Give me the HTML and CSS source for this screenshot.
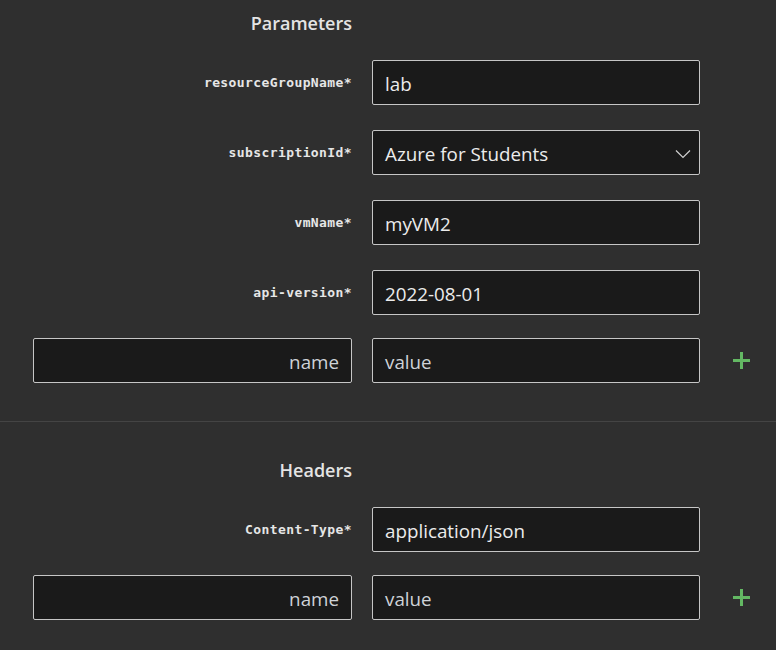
FILE: index.html
```html
<!DOCTYPE html>
<html>
<head>
<meta charset="utf-8">
<link rel="stylesheet" href="styles.css">
</head>
<body>
<section class="section section-params">
  <h2 class="heading">Parameters</h2>
  <div class="rows">
    <div class="row">
      <label class="label">resourceGroupName*</label>
      <div class="field"><span class="value">lab</span></div>
    </div>
    <div class="row">
      <label class="label">subscriptionId*</label>
      <div class="field select"><span class="value">Azure for Students</span>
        <svg class="chevron" width="16" height="10" viewBox="0 0 16 10"><path d="M1 1.5 L8 8.5 L15 1.5" fill="none" stroke="#d0d0d0" stroke-width="1.2"/></svg>
      </div>
    </div>
    <div class="row">
      <label class="label">vmName*</label>
      <div class="field"><span class="value">myVM2</span></div>
    </div>
    <div class="row">
      <label class="label">api-version*</label>
      <div class="field"><span class="value">2022-08-01</span></div>
    </div>
  </div>
  <div class="row add-row">
    <div class="field name-field"><span class="placeholder">name</span></div>
    <div class="field"><span class="placeholder">value</span></div>
    <span class="plus" aria-label="add"></span>
  </div>
</section>
<section class="section section-headers">
  <h2 class="heading">Headers</h2>
  <div class="rows">
    <div class="row">
      <label class="label">Content-Type*</label>
      <div class="field"><span class="value">application/json</span></div>
    </div>
  </div>
  <div class="row add-row">
    <div class="field name-field"><span class="placeholder">name</span></div>
    <div class="field"><span class="placeholder">value</span></div>
    <span class="plus" aria-label="add"></span>
  </div>
</section>
</body>
</html>
```
FILE: styles.css
```css
html, body {
  margin: 0;
  padding: 0;
  background: #2f2f2f;
  width: 776px;
  height: 650px;
  overflow: hidden;
}
body {
  font-family: "Open Sans", "Noto Sans", sans-serif;
  color: #e6e6e6;
}
.section {
  padding-left: 33px;
}
.section-params {
  padding-top: 11px;
  padding-bottom: 38px;
  border-bottom: 1px solid #444444;
}
.section-headers {
  padding-top: 36px;
}
.heading {
  margin: 0 0 25px 0;
  width: 319px;
  text-align: right;
  font-size: 18px;
  line-height: 24px;
  font-weight: 600;
  color: #e4e4e4;
}
.rows {
  display: flex;
  flex-direction: column;
  gap: 25px;
}
.row {
  display: flex;
  align-items: center;
  gap: 20px;
}
.add-row {
  margin-top: 23px;
}
.label {
  width: 319px;
  text-align: right;
  font-family: "DejaVu Sans Mono", "Liberation Mono", monospace;
  font-weight: bold;
  font-size: 13px;
  color: #e6e6e6;
  letter-spacing: 0.4px;
}
.field {
  box-sizing: border-box;
  width: 328px;
  height: 45px;
  background: #1a1a1a;
  border: 1px solid #c6c6c6;
  border-radius: 2px;
  display: flex;
  align-items: center;
  padding: 2px 12px 0 12px;
  font-size: 18.8px;
}
.name-field {
  width: 319px;
  justify-content: flex-end;
}
.value {
  color: #ececec;
}
.placeholder {
  color: #cfd3d8;
}
.select {
  justify-content: space-between;
  padding-right: 8px;
}
.chevron {
  display: block;
}
.plus {
  position: relative;
  width: 17px;
  height: 17px;
  margin-left: 13px;
}
.plus::before, .plus::after {
  content: "";
  position: absolute;
  background: #63b863;
}
.plus::before {
  left: 0;
  right: 0;
  top: 7px;
  height: 3px;
}
.plus::after {
  top: 0;
  bottom: 0;
  left: 7px;
  width: 3px;
}
```
